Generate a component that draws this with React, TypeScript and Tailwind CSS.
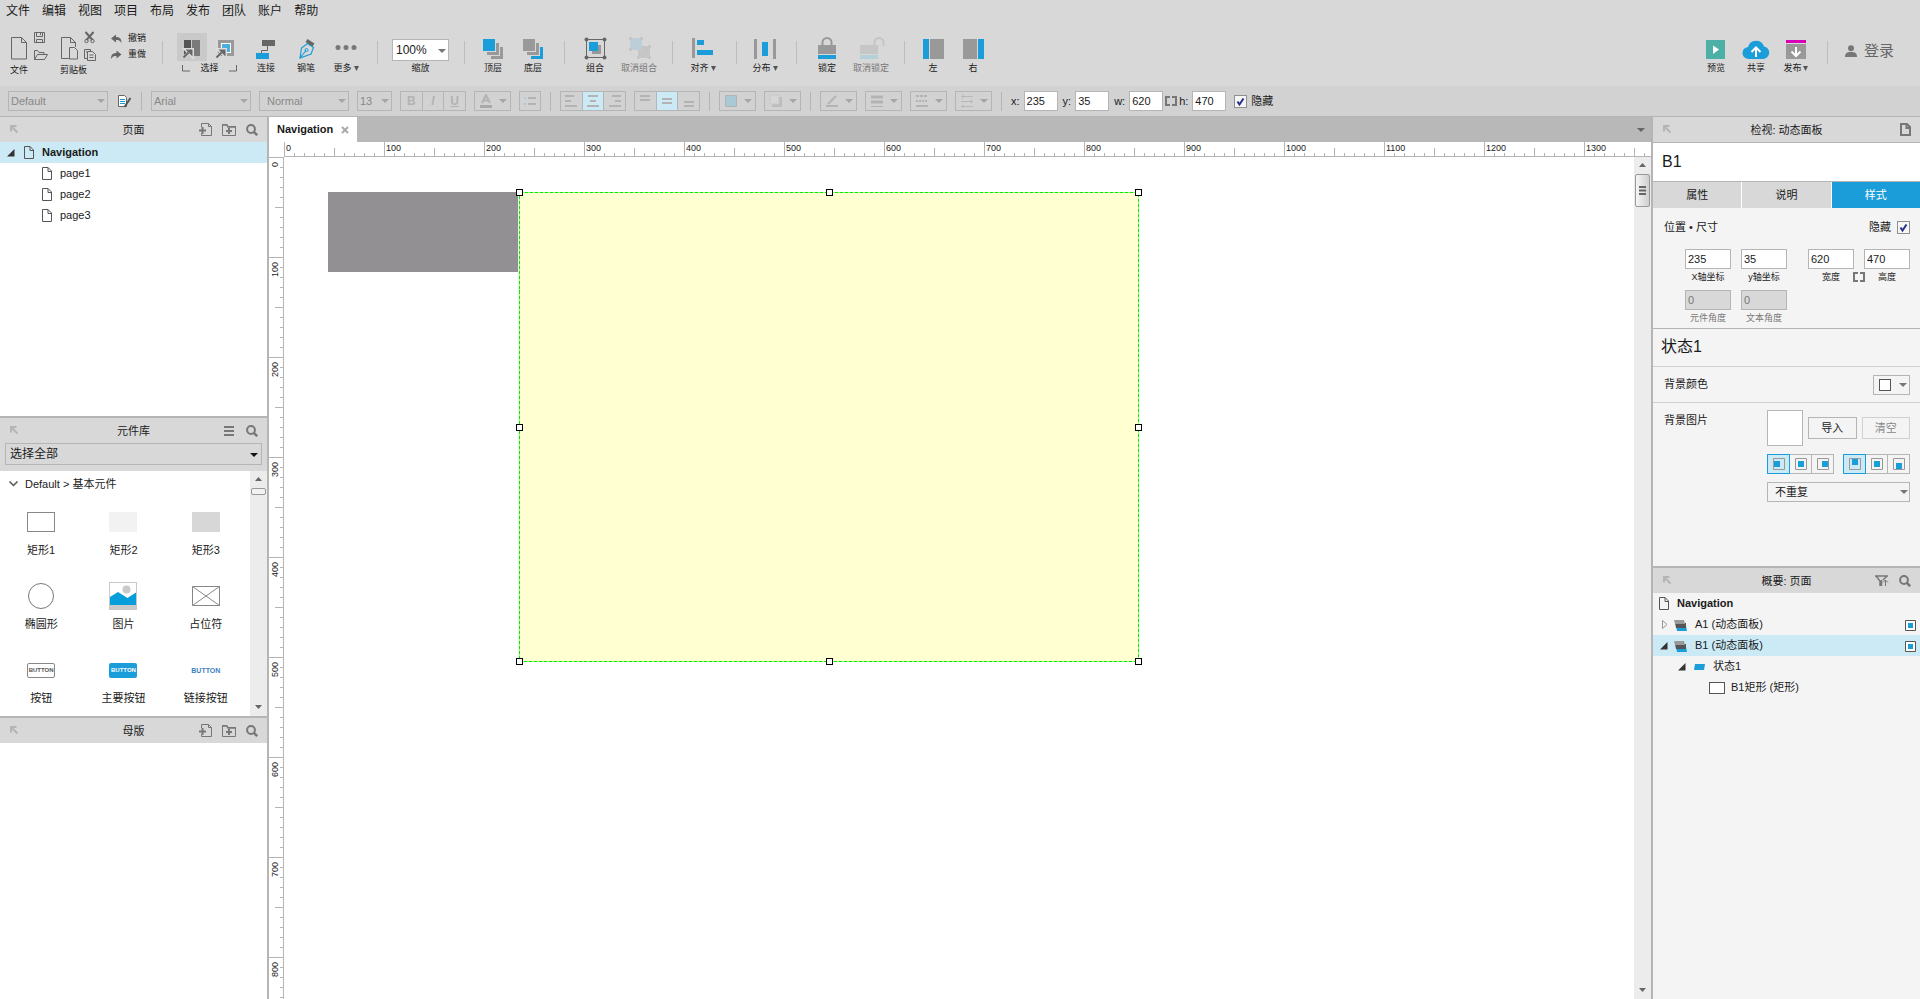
import React, { useLayoutEffect, useRef, useState } from 'react';

interface ToolProps {
  label: string;
  disabled?: boolean;
  menu?: boolean;
  wide?: boolean;
  children: React.ReactNode;
}

const Svg: React.FC<{ w: number; h: number; children: React.ReactNode }> = ({ w, h, children }) => (
  <svg width={w} height={h} viewBox={`0 0 ${w} ${h}`} fill="none" className="block shrink-0" aria-hidden="true">{children}</svg>
);

const Tool: React.FC<ToolProps> = ({ label, disabled, menu, wide, children }) => (
  <button
    disabled={disabled}
    className={`flex flex-col items-center shrink-0 ${wide ? 'w-11' : 'w-10'} ${disabled ? 'text-[#777]' : 'text-[#1a1a1a]'}`}
  >
    <Svg w={28} h={32}>{children}</Svg>
    <span className="flex items-center gap-[2px] text-[9px] leading-3 whitespace-nowrap">
      {label}
      {menu && <Svg w={5} h={5}><path d="M0 0h5L2.5 5z" fill="#555" /></Svg>}
    </span>
  </button>
);

const Divider = () => <div className="w-px h-[23px] mt-[11px] ml-[11px] mr-[8px] bg-[#bdbdbd] shrink-0" />;
const BarDivider = () => <div className="w-px h-[19px] mx-px bg-[#b5b5b5] shrink-0" />;

const Caret: React.FC<{ color?: string }> = ({ color = '#777' }) => (
  <Svg w={8} h={4}><path d="M0 0h8L4 4z" fill={color} /></Svg>
);

const PageIcon = () => (
  <Svg w={10} h={13}>
    <path d="M.5.5h5.5l3.5 3.5v8.5h-9zM6 .5v4h3.500" stroke="#555" />
  </Svg>
);

const PinIcon = () => (
  <button aria-label="Dock" className="justify-self-start ml-[10px]">
    <Svg w={8} h={9}><path d="M1 6.500V1h5.500M1.500 1.500l6 6" stroke="#b5b5b5" strokeWidth="2" /></Svg>
  </button>
);

const SearchIcon = () => (
  <button aria-label="Search">
    <Svg w={12} h={12}>
      <circle cx="5" cy="5" r="3.900" stroke="#777" strokeWidth="2" />
      <path d="M7.800 7.800l3.400 3.400" stroke="#777" strokeWidth="2.500" />
    </Svg>
  </button>
);

const AddPageIcon = () => (
  <button aria-label="Add page">
    <Svg w={13} h={13}>
      <path d="M2.500 4V.500h7l3 3v9h-10v-2M9.500.500v3h3" stroke="#777" />
      <path d="M0 7.500h7M3.500 4v7" stroke="#777" strokeWidth="2" />
    </Svg>
  </button>
);

const AddFolderIcon = () => (
  <button aria-label="Add folder">
    <Svg w={14} h={12}>
      <path d="M.500 11.500v-11h4l1 2h8v9z" stroke="#777" />
      <path d="M0 1h5l1 2h8" stroke="#777" strokeWidth="1.500" />
      <path d="M4 7h6M7 4v6" stroke="#777" strokeWidth="2" />
    </Svg>
  </button>
);

const PanelHeader: React.FC<{ title: string; children?: React.ReactNode }> = ({ title, children }) => (
  <div className="grid grid-cols-[1fr_auto_1fr] items-center h-[25px] bg-[#d8d8d8] shrink-0">
    <PinIcon />
    <h2 className="text-[11px] leading-4">{title}</h2>
    <div className="flex items-center justify-end gap-[10px] pr-[9px]">{children}</div>
  </div>
);

const Check: React.FC<{ id: string }> = ({ id }) => {
  const [on, setOn] = useState(true);
  return (
    <span className="relative block size-[13px] shrink-0">
      <input
        id={id}
        type="checkbox"
        checked={on}
        onChange={e => setOn(e.target.checked)}
        className="block size-[13px] appearance-none border border-[#8f8f8f] bg-[#f6f6f6]"
      />
      {on && (
        <svg viewBox="0 0 13 13" className="absolute inset-0 pointer-events-none" fill="none">
          <path d="M3.500 6.500l2 3L9.500 3.500" stroke="#26308c" strokeWidth="2" />
        </svg>
      )}
    </span>
  );
};

const BarSelect: React.FC<{ label: string; value: string; width: string; pad?: string }> = ({ label, value, width, pad = 'pl-[2px]' }) => (
  <span className={`relative block shrink-0 ${width}`}>
    <select
      aria-label={label}
      disabled
      className={`block w-full h-5 appearance-none border border-[#b5b5b5] text-[11px] leading-4 text-[#888] opacity-100 ${pad}`}
    >
      <option>{value}</option>
    </select>
    <span className="absolute right-[3px] top-2 pointer-events-none"><Caret color="#a5a5a5" /></span>
  </span>
);

const IconGroup: React.FC<{ label: string; active?: number; icons: React.ReactNode[] }> = ({ label, active, icons }) => (
  <div role="group" aria-label={label} className="flex h-5 w-[66px] border border-[#b5b5b5] divide-x divide-[#b5b5b5] shrink-0">
    {icons.map((icon, i) => (
      <button key={i} disabled aria-label={`${label} ${i + 1}`} className={`flex-1 flex items-center justify-center ${i === active ? 'bg-[#cbeaf6]' : ''}`}>
        {icon}
      </button>
    ))}
  </div>
);

const IconMenu: React.FC<{ label: string; children: React.ReactNode }> = ({ label, children }) => (
  <button disabled aria-label={label} className="flex items-center justify-between h-5 w-[37px] pl-1 pr-[3px] border border-[#b5b5b5] shrink-0">
    <Svg w={14} h={14}>{children}</Svg>
    <Caret color="#a5a5a5" />
  </button>
);

const lines = (d: string) => <Svg w={14} h={14}><path d={d} stroke="#b3b3b3" strokeWidth="2" /></Svg>;

const LinkIcon = () => (
  <Svg w={12} h={10}><path d="M5 1H1v8h4M7 1h4v8H7" stroke="#777" strokeWidth="2" /></Svg>
);

const BarField: React.FC<{ name: string; value: string }> = ({ name, value }) => (
  <span className="flex items-center gap-1">
    <label htmlFor={`bar-${name}`} className="text-[11px] leading-4">{name}:</label>
    <input id={`bar-${name}`} defaultValue={value} className="w-[34px] h-5 px-[2px] border border-[#b5b5b5] bg-white text-[11px] leading-4" />
  </span>
);

const menus = ['文件', '编辑', '视图', '项目', '布局', '发布', '团队', '账户', '帮助'];

const CursorArrow = () => (
  <>
    <path d="M6.500 24.500l5-5M8.500 16.500h7v7z" stroke="#ddd" strokeWidth="3" />
    <path d="M6.500 24.500l5-5" stroke="#666" strokeWidth="2" />
    <path d="M8.500 16.500h7v7z" fill="#666" />
  </>
);

const Toolbar = () => (
  <div className="flex items-start h-16 pt-2 pl-[10px] pr-[26px]">
    <div className="flex flex-col items-start w-[50px] shrink-0">
      <div className="flex gap-[6px]">
        <button aria-label="New">
          <Svg w={18} h={32}><path d="M1.500 7.500h10l5 5v16.500h-15zM11.500 7.500v5h5" stroke="#666" /></Svg>
        </button>
        <div className="flex flex-col">
          <button aria-label="Save">
            <Svg w={14} h={16}><path d="M.500 2.500h10v10H.500zM2.500 2.500v4h6v-4M2.500 12.500v-3h6v3M6.500 3v2" stroke="#666" /></Svg>
          </button>
          <button aria-label="Open">
            <Svg w={14} h={16}><path d="M.500 13.500v-9h3l1.500 2h5v2M.500 13.500l3-5h10l-3 5z" stroke="#666" /></Svg>
          </button>
        </div>
      </div>
      <span className="text-[9px] leading-4">文件</span>
    </div>
    <div className="flex flex-col items-start w-[50px] shrink-0">
      <div className="flex gap-[6px]">
        <button aria-label="Paste">
          <Svg w={18} h={32}><path d="M9 28.500H1.500v-21h9l5 5V17M10.500 7.500v5h5M9.500 17.500h5l3 3v8.500h-8z" stroke="#666" /></Svg>
        </button>
        <div className="flex flex-col">
          <button aria-label="Cut">
            <Svg w={14} h={16}>
              <path d="M1.500 2l7 8M9.500 2l-7 8" stroke="#666" strokeWidth="2" />
              <circle cx="2.500" cy="11" r="1.700" stroke="#666" /><circle cx="8.500" cy="11" r="1.700" stroke="#666" />
            </Svg>
          </button>
          <button aria-label="Copy">
            <Svg w={14} h={16}><path d="M3.500 12.500h-3v-9h6v2M3.500 5.500h5l3 3v6h-8zM5.500 9h4M5.500 11.500h4M2 6h1" stroke="#666" /></Svg>
          </button>
        </div>
      </div>
      <span className="text-[9px] leading-4">剪贴板</span>
    </div>
    <div className="flex flex-col pt-px shrink-0">
      <button className="flex items-center gap-[6px] h-4 text-[9px]">
        <Svg w={12} h={10}><path d="M1 4.500L6 .500v2.500c4 0 5.500 2 5.500 6-1.500-2.500-3-3-5.500-3v2.500z" fill="#666" /></Svg>撤销
      </button>
      <button className="flex items-center gap-[6px] h-4 text-[9px]">
        <Svg w={12} h={10}><path d="M11.500 4.500L6.500.500v2.500C2.500 3 1 5 1 9c1.500-2.500 3-3 5.500-3v2.500z" fill="#666" /></Svg>重做
      </button>
    </div>
    <div className="w-px h-[23px] mt-[11px] ml-4 mr-[14px] bg-[#bdbdbd] shrink-0" />

    <div className="flex flex-col w-[63px] mr-[6px] shrink-0">
      <div className="flex gap-[3px] h-8 pt-[3px]">
        <button aria-label="Select intersected" className="h-7 bg-[#c9c9c9]">
          <Svg w={30} h={28}>
            <path d="M7 7h7v15H7z" fill="#555" /><path d="M15 7h8v16h-8z" fill="#7a7a7a" />
            <CursorArrow />
          </Svg>
        </button>
        <button aria-label="Select contained" className="h-7">
          <Svg w={30} h={28}>
            <path d="M9.500 8.500h13v13h-13z" fill="#fff" stroke="#999" strokeWidth="3" /><path d="M12 11h8v8h-8z" fill="#4aaee0" />
            <CursorArrow />
          </Svg>
        </button>
      </div>
      <div className="flex items-center justify-between pl-[5px] pr-[3px] text-[9px] leading-3">
        <Svg w={8} h={8}><path d="M.500 1v6h7.500" stroke="#666" /></Svg>选择
        <Svg w={8} h={8}><path d="M7.500 1v6H0" stroke="#666" /></Svg>
      </div>
    </div>
    <Tool label="连接">
      <path d="M10 10h13v6H10z" fill="#666" /><path d="M4 23h13v6H4z" fill="#1b9dd9" /><path d="M15.500 16v4.500h-6V23" stroke="#666" />
    </Tool>
    <Tool label="钢笔">
      <path d="M8 28l1.500-10 6-4.500 6 4-2.500 6.500zM8 28l6-7.500" stroke="#1b9dd9" strokeWidth="1.200" />
      <circle cx="14.500" cy="20" r="1.500" stroke="#1b9dd9" /><path d="M14.500 10.500l7 4.500" stroke="#666" strokeWidth="3.500" />
    </Tool>
    <Tool label="更多" menu>
      <g fill="#777"><circle cx="6" cy="17.500" r="2.500" /><circle cx="14" cy="17.500" r="2.500" /><circle cx="22" cy="17.500" r="2.500" /></g>
    </Tool>
    <Divider />
    <div className="flex flex-col items-center pl-[6px] pr-1 shrink-0">
      <div className="relative h-8 pt-[9px]">
        <select id="zoom" className="block w-[57px] h-[22px] pl-[3px] appearance-none border border-[#b5b5b5] bg-white text-xs leading-4">
          <option>100%</option>
        </select>
        <span className="absolute right-[3px] top-[19px] pointer-events-none"><Caret /></span>
      </div>
      <label htmlFor="zoom" className="text-[9px] leading-3">缩放</label>
    </div>
    <Divider />
    <Tool label="顶层">
      <path d="M4 9h12v12H4z" fill="#1b9dd9" /><path d="M17 13h3v12H8v-3h9zM21 17h3v12H12v-3h9z" fill="#999" />
    </Tool>
    <Tool label="底层">
      <path d="M4 9h12v12H4zM17 13h3v12H8v-3h9z" fill="#999" /><path d="M21 17h3v12H12v-3h9z" fill="#1b9dd9" />
    </Tool>
    <Divider />
    <Tool label="组合" wide>
      <path d="M11 15h9v9h-9z" fill="#999" /><path d="M8 12h9v9H8z" fill="#1b9dd9" /><path d="M5.500 9.500h18v18h-18z" stroke="#666" />
      <g fill="#666"><circle cx="5.500" cy="9.500" r="2" /><circle cx="23.500" cy="9.500" r="2" /><circle cx="5.500" cy="27.500" r="2" /><circle cx="23.500" cy="27.500" r="2" /></g>
    </Tool>
    <Tool label="取消组合" disabled wide>
      <path d="M13 16h12v12H13z" fill="#c6c6c6" /><path d="M5 8h12v12H5z" fill="#bccfd8" />
      <path d="M4 7h3v3H4zM15 7h3v3h-3zM4 18h3v3H4zM23 15h3v3h-3zM12 26h3v3h-3zM23 26h3v3h-3z" fill="#c6c6c6" />
    </Tool>
    <Divider />
    <Tool label="对齐" menu wide>
      <path d="M3 8h3v20H3z" fill="#999" /><path d="M8 10h7v5H8zM8 20h16v5H8z" fill="#1b9dd9" />
    </Tool>
    <Divider />
    <Tool label="分布" menu>
      <path d="M3 9h3v20H3zM22 9h3v20h-3z" fill="#999" /><path d="M11 12h6v14h-6z" fill="#1b9dd9" />
    </Tool>
    <Divider />
    <Tool label="锁定" wide>
      <path d="M9.500 15v-2.500a4.500 4.500 0 0 1 9 0V15" stroke="#999" strokeWidth="2" /><path d="M5 15h18v9H5z" fill="#999" /><path d="M5 25h18v4H5z" fill="#1b9dd9" />
    </Tool>
    <Tool label="取消锁定" disabled wide>
      <path d="M17.500 15v-2.500a4.500 4.500 0 0 1 9 0V16" stroke="#c4c4c4" strokeWidth="2" /><path d="M3 15h18v9H3z" fill="#c6c6c6" /><path d="M3 25h18v4H3z" fill="#b5cfdb" />
    </Tool>
    <Divider />
    <Tool label="左"><path d="M4 9h6v20H4z" fill="#1b9dd9" /><path d="M11 9h14v20H11z" fill="#999" /></Tool>
    <Tool label="右"><path d="M4 9h14v20H4z" fill="#999" /><path d="M19 9h6v20h-6z" fill="#1b9dd9" /></Tool>

    <div className="flex items-start ml-auto shrink-0">
      <Tool label="预览"><path d="M4 10h19v19H4z" fill="#4cb0a6" /><path d="M11 15.500l6 4-6 4.500z" fill="#fff" /></Tool>
      <Tool label="共享">
        <path d="M7 29a6 6 0 0 1-1-12 8.300 8.300 0 0 1 16-0.500A6.300 6.300 0 0 1 21 29z" fill="#1b9dd9" />
        <path d="M14 27v-8M9.500 22l4.500-4.500 4.500 4.500" stroke="#fff" strokeWidth="2" />
      </Tool>
      <Tool label="发布" menu>
        <path d="M4 10h20v3H4z" fill="#d800b8" /><path d="M4 14h20v15H4z" fill="#999" /><path d="M14 17v8M9.500 21.500L14 26l4.500-4.500" stroke="#fff" strokeWidth="2" />
      </Tool>
      <Divider />
      <button className="flex items-center gap-[7px] h-5 mt-[11px] ml-[9px] text-[15px] text-[#666]">
        <Svg w={12} h={12}><circle cx="6" cy="3.200" r="3" fill="#777" /><path d="M0 12c0-4 2-5 6-5s6 1 6 5z" fill="#777" /></Svg>登录
      </button>
    </div>
  </div>
);

const StyleBar = () => (
  <div className="flex items-center gap-2 h-[31px] pl-2 bg-[#d2d2d2] border-b border-[#b5b5b5]">
    <BarSelect label="Style" value="Default" width="w-[100px]" />
    <button aria-label="Edit style">
      <Svg w={16} h={14}>
        <path d="M2.500 1.500h6l2 2v9h-8z" fill="#fff" stroke="#666" /><path d="M4 5.500h5M4 7.500h5M4 9.500h5" stroke="#1b9dd9" />
        <path d="M8.500 13l6-9" stroke="#555" strokeWidth="2" />
      </Svg>
    </button>
    <BarDivider />
    <BarSelect label="Font" value="Arial" width="w-[100px]" />
    <BarSelect label="Weight" value="Normal" width="w-[90px]" pad="pl-[7px]" />
    <BarSelect label="Size" value="13" width="w-[35px]" />
    <IconGroup
      label="Text style"
      icons={[
        <b className="text-xs leading-4 text-[#b3b3b3]">B</b>,
        <b className="text-xs leading-4 italic text-[#b3b3b3]">I</b>,
        <b className="text-xs leading-4 underline text-[#b3b3b3]">U</b>,
      ]}
    />
    <IconMenu label="Text color"><path d="M3 9l4-8 4 8M4.500 6.500h5" stroke="#b3b3b3" strokeWidth="2" /><path d="M1 11h12v3H1z" fill="#a9a9a9" /></IconMenu>
    <button disabled aria-label="Bullets" className="flex items-center justify-center w-[22px] h-5 border border-[#b5b5b5] shrink-0">
      <Svg w={14} h={12}><path d="M5 3h8M5 9h8" stroke="#b3b3b3" strokeWidth="2" /><path d="M1 3h2M1 9h2" stroke="#a5cbdc" strokeWidth="2" /></Svg>
    </button>
    <BarDivider />
    <IconGroup label="Align" active={1} icons={[lines('M1 2h9M1 7h6M1 12h12'), lines('M2 2h10M4 7h6M1 12h12'), lines('M4 2h9M7 7h6M1 12h12')]} />
    <IconGroup label="Vertical align" active={1} icons={[lines('M2 2h10M2 6h10'), lines('M2 5h10M2 9h10'), lines('M2 8h10M2 12h10')]} />
    <BarDivider />
    <IconMenu label="Fill"><path d="M1.500 1.500h11v11h-11z" fill="#a9c9d6" stroke="#b3b3b3" /></IconMenu>
    <IconMenu label="Shadow"><path d="M3 3h10v10H3z" fill="#bdbdbd" /><path d="M1 1h9v9H1z" fill="#d6d6d6" stroke="#c8c8c8" /></IconMenu>
    <BarDivider />
    <IconMenu label="Line color"><path d="M1 12h12" stroke="#b3b3b3" strokeWidth="2" /><path d="M3 10l8-8" stroke="#b3b3b3" strokeWidth="2" /></IconMenu>
    <IconMenu label="Line width"><path d="M1 3h12M1 8h12" stroke="#b3b3b3" strokeWidth="3" /><path d="M1 12.500h12" stroke="#b3b3b3" /></IconMenu>
    <IconMenu label="Line style"><path d="M1 2h12" stroke="#b3b3b3" strokeWidth="2" strokeDasharray="3 1" /><path d="M1 7h12" stroke="#b3b3b3" strokeWidth="2" strokeDasharray="2 1" /><path d="M1 12h12" stroke="#b3b3b3" strokeWidth="2" /></IconMenu>
    <IconMenu label="Arrow style"><path d="M1 2.500h12M1 7.500h12M1 12.500h12M3 .500v4M11 5.500v4M3 10.500v3.500" stroke="#b8b8b8" /></IconMenu>
    <BarDivider />
    <div className="flex items-center gap-[5px]">
      <BarField name="x" value="235" />
      <BarField name="y" value="35" />
      <span className="flex items-center gap-[2px]">
        <BarField name="w" value="620" />
        <LinkIcon />
        <BarField name="h" value="470" />
      </span>
    </div>
    <span className="flex items-center gap-1">
      <Check id="bar-hidden" />
      <label htmlFor="bar-hidden" className="text-[11px] leading-4">隐藏</label>
    </span>
  </div>
);

const OpenTriangle = () => <Svg w={8} h={8}><path d="M7.500 0v7.500H0z" fill="#333" /></Svg>;

const ScrollArrow: React.FC<{ up?: boolean }> = ({ up }) => (
  <Svg w={7} h={4}><path d={up ? 'M0 4h7L3.500 0z' : 'M0 0h7L3.500 4z'} fill="#666" /></Svg>
);

const widgets: { name: string; icon: React.ReactNode }[] = [
  { name: '矩形1', icon: <div className="w-7 h-5 border border-[#888]" /> },
  { name: '矩形2', icon: <div className="w-7 h-5 bg-[#f2f2f2]" /> },
  { name: '矩形3', icon: <div className="w-7 h-5 bg-[#d7d7d7]" /> },
  { name: '椭圆形', icon: <div className="size-[26px] rounded-full border border-[#777]" /> },
  {
    name: '图片',
    icon: (
      <Svg w={28} h={28}>
        <path d="M0 0h28v28H0z" fill="#c9c9c9" /><path d="M1 1h26v22H1z" fill="#fff" />
        <circle cx="17.500" cy="7.500" r="4" fill="#c9c9c9" /><path d="M1 15l8-5 9.500 6 8.500-5.500V23H1z" fill="#069ddb" />
      </Svg>
    ),
  },
  { name: '占位符', icon: <Svg w={28} h={20}><path d="M.500.500h27v19H.500zM.500.500l27 19M27.500.500l-27 19" stroke="#888" /></Svg> },
  { name: '按钮', icon: <span className="w-7 h-[15px] rounded-xs border border-[#888] text-[6px] leading-[13px] font-bold text-center text-[#555]">BUTTON</span> },
  { name: '主要按钮', icon: <span className="w-7 h-[15px] rounded-xs bg-[#1b9dd9] text-[6px] leading-[15px] font-bold text-center text-white">BUTTON</span> },
  { name: '链接按钮', icon: <span className="text-[7px] leading-[15px] font-bold text-[#3c7fc0]">BUTTON</span> },
];

const LeftPanels = () => (
  <aside className="flex flex-col w-[269px] border-r-2 border-[#b5b5b5] bg-white shrink-0">
    <PanelHeader title="页面"><AddPageIcon /><AddFolderIcon /><SearchIcon /></PanelHeader>
    <ul className="h-[274px] text-[11px]">
      <li className="flex items-center h-[21px] pl-[7px] bg-[#cbeaf6] font-bold">
        <OpenTriangle /><span className="ml-[9px] mr-2"><PageIcon /></span>Navigation
      </li>
      {['page1', 'page2', 'page3'].map(page => (
        <li key={page} className="flex items-center gap-2 h-[21px] pl-[42px]"><PageIcon />{page}</li>
      ))}
    </ul>

    <section className="border-y-2 border-[#b5b5b5]">
      <PanelHeader title="元件库">
        <button aria-label="Menu" className="px-[2px]"><Svg w={10} h={10}><path d="M0 1h10M0 5h10M0 9h10" stroke="#777" strokeWidth="2" /></Svg></button>
        <SearchIcon />
      </PanelHeader>
      <div className="px-[5px] pb-[6px] bg-[#d8d8d8]">
        <div className="relative">
          <select aria-label="元件库" className="block w-full h-[22px] pl-1 appearance-none border border-[#b5b5b5] text-xs leading-4">
            <option>选择全部</option>
          </select>
          <span className="absolute right-1 top-[10px] pointer-events-none"><Caret color="#111" /></span>
        </div>
      </div>
      <div className="flex">
        <div className="flex-1">
          <button className="flex items-center gap-[7px] h-[26px] pl-[9px] text-[11px]">
            <Svg w={9} h={6}><path d="M.500.500l4 4 4-4" stroke="#555" strokeWidth="1.500" /></Svg>Default &gt; 基本元件
          </button>
          <ul className="grid grid-cols-3 gap-y-[23px] pt-[9px] pb-[11px] pr-[3px]">
            {widgets.map(widget => (
              <li key={widget.name} className="flex flex-col items-center gap-[5px]">
                <div className="flex items-center h-8">{widget.icon}</div>
                <span className="text-[11px] leading-[14px]">{widget.name}</span>
              </li>
            ))}
          </ul>
        </div>
        <div className="flex flex-col items-center w-[17px] pt-[6px] pb-[7px] bg-[#ececec]">
          <ScrollArrow up />
          <div className="w-[15px] h-[7px] mt-[7px] rounded-xs border border-[#999] bg-[#f2f2f2]" />
          <span className="mt-auto"><ScrollArrow /></span>
        </div>
      </div>
    </section>
    <PanelHeader title="母版"><AddPageIcon /><AddFolderIcon /><SearchIcon /></PanelHeader>
  </aside>
);

const tickSize = (pos: number) => (pos % 100 === 0 ? 15 : pos % 50 === 0 ? 9 : 4);

const Ruler: React.FC<{ vertical?: boolean }> = ({ vertical }) => {
  const ref = useRef<HTMLDivElement>(null);
  const [length, setLength] = useState(0);

  useLayoutEffect(() => {
    const el = ref.current;
    if (!el) return;
    const measure = () => setLength(vertical ? el.clientHeight : el.clientWidth);
    measure();
    window.addEventListener('resize', measure);
    return () => window.removeEventListener('resize', measure);
  }, [vertical]);

  const ticks = Array.from({ length: Math.ceil(length / 10) }, (_, i) => i * 10);
  const labels = ticks.filter(pos => pos % 100 === 0 && pos + 24 < length);

  return (
    <div ref={ref} className="relative overflow-hidden">
      <svg className="absolute inset-0 size-full" aria-hidden="true" shapeRendering="crispEdges" fill="#b5b5b5">
        {ticks.map(pos => {
          const size = tickSize(pos);
          return vertical
            ? <rect key={pos} x={15 - size} y={pos} width={size} height="1" />
            : <rect key={pos} x={pos} y={15 - size} width="1" height={size} />;
        })}
        {vertical ? <rect x="14" width="1" height="100%" /> : <rect y="14" width="100%" height="1" />}
        {labels.map(pos => (
          <text
            key={pos}
            transform={vertical ? `translate(9 ${pos + 5}) rotate(-90)` : `translate(${pos + 2} 9)`}
            textAnchor={vertical ? 'end' : 'start'}
            fontSize="9"
            fill="#222"
          >
            {pos}
          </text>
        ))}
      </svg>
    </div>
  );
};

const Canvas = () => (
  <main className="flex flex-col flex-1 min-w-0">
    <div className="flex items-center h-[25px] pr-[6px] bg-[#b8b8b8] shrink-0">
      <div className="flex items-center gap-2 h-full px-2 bg-white text-[11px] font-bold">
        Navigation
        <button aria-label="Close tab"><Svg w={8} h={8}><path d="M1 1l6 6M7 1L1 7" stroke="#aaa" strokeWidth="2" /></Svg></button>
      </div>
      <button aria-label="Tabs" className="ml-auto"><Caret color="#666" /></button>
    </div>
    <div className="grid grid-cols-[15px_1fr] grid-rows-[15px_1fr] flex-1 min-h-0 bg-white">
      <div />
      <Ruler />
      <Ruler vertical />
      <div className="flex min-h-0">
        <div className="relative flex-1 overflow-hidden">
          <div className="absolute left-[44px] top-[35px] w-[190px] h-[80px] bg-[#929092]" />
          <div className="absolute left-[235px] top-[35px] w-[620px] h-[470px] bg-[#ffffd1]">
            <svg width="620" height="470" className="block overflow-visible" fill="none" shapeRendering="crispEdges">
              <rect x=".5" y=".5" width="619" height="469" stroke="#9dff7a" />
              <rect x=".5" y=".5" width="619" height="469" stroke="#00ee00" strokeDasharray="3 2" />
              {[[0, 0], [310, 0], [619, 0], [0, 235], [619, 235], [0, 469], [310, 469], [619, 469]].map(([x, y]) => (
                <rect key={`${x}-${y}`} x={x - 2.5} y={y - 2.5} width="6" height="6" fill="#fff" stroke="#000" />
              ))}
            </svg>
          </div>
        </div>
        <div className="flex flex-col items-center w-[17px] pt-[6px] pb-[7px] bg-[#ececec]">
          <ScrollArrow up />
          <div className="flex items-center justify-center w-[15px] h-[33px] mt-[7px] rounded-xs border border-[#999] bg-linear-to-r from-[#f6f6f6] to-[#cfcfcf]">
            <Svg w={7} h={9}><path d="M0 1h7M0 4.500h7M0 8h7" stroke="#666" strokeWidth="2" /></Svg>
          </div>
          <span className="mt-auto"><ScrollArrow /></span>
        </div>
      </div>
    </div>
  </main>
);

const SizeField: React.FC<{ label: string; value: string; disabled?: boolean }> = ({ label, value, disabled }) => {
  const id = `field-${label}`;
  return (
    <div className="flex flex-col items-center w-[46px]">
      <input
        id={id}
        defaultValue={value}
        disabled={disabled}
        className="w-full h-5 px-[2px] border border-[#b5b5b5] bg-white text-[11px] leading-4 disabled:bg-[#d8d8d8] disabled:text-[#777]"
      />
      <label htmlFor={id} className={`text-[9px] leading-4 whitespace-nowrap ${disabled ? 'text-[#777]' : ''}`}>{label}</label>
    </div>
  );
};

const Anchors: React.FC<{ label: string; spots: [number, number][] }> = ({ label, spots }) => {
  const [active, setActive] = useState(0);
  return (
    <div role="group" aria-label={label} className="flex">
      {spots.map(([x, y], i) => (
        <button
          key={i}
          aria-label={`${label} ${i + 1}`}
          onClick={() => setActive(i)}
          className={`flex items-center justify-center w-[23px] h-5 border ${i > 0 ? '-ml-px' : ''} ${i === active ? 'relative border-[#1b9dd9] bg-[#cbeaf6]' : 'border-[#b5b5b5]'}`}
        >
          <Svg w={12} h={12}><path d="M.500.500h11v11H.500z" stroke="#999" /><rect x={x} y={y} width="6" height="6" fill="#1b9dd9" /></Svg>
        </button>
      ))}
    </div>
  );
};

const PanelIcon = () => (
  <Svg w={13} h={12}>
    <path d="M2 7h10l1 5H3z" fill="#1b9dd9" /><path d="M1 4h11v5H2z" fill="#555" /><path d="M0 1h10l1 4H1z" fill="#999" />
  </Svg>
);

const Marker = () => (
  <span className="ml-auto mr-1 mt-px"><Svg w={11} h={11}><path d="M.500.500h10v10H.500z" fill="#fff" stroke="#555" /><path d="M3 3h5v5H3z" fill="#1b9dd9" /></Svg></span>
);

const RightPanels = () => (
  <aside className="flex flex-col w-[269px] border-l-2 border-[#b5b5b5] bg-[#f4f4f4] shrink-0">
    <PanelHeader title="检视: 动态面板">
      <button aria-label="Page"><Svg w={11} h={13}><path d="M1 1h6l3 3v8H1zM6.500 1v4H10" stroke="#777" strokeWidth="2" /></Svg></button>
    </PanelHeader>
    <div className="h-10 border-y border-[#b5b5b5] bg-white">
      <input aria-label="Name" defaultValue="B1" className="block w-full h-[38px] pl-[9px] text-base" />
    </div>
    <div className="flex gap-px h-[26px] bg-white text-[11px]">
      <button className="flex-1 bg-[#d8d8d8]">属性</button>
      <button className="flex-1 bg-[#d8d8d8]">说明</button>
      <button className="flex-1 bg-[#1b9dd9] text-white">样式</button>
    </div>

    <section className="pl-[11px] pr-[10px] pt-[11px] pb-[2px] border-b border-[#b5b5b5] text-[11px] leading-4">
      <div className="flex items-center justify-between">
        <h3>位置 • 尺寸</h3>
        <span className="flex items-center gap-[6px]">
          <label htmlFor="hidden">隐藏</label>
          <Check id="hidden" />
        </span>
      </div>
      <div className="flex justify-end gap-[10px] mt-[14px]">
        <SizeField label="X轴坐标" value="235" />
        <SizeField label="y轴坐标" value="35" />
        <div className="flex items-end ml-[11px]">
          <SizeField label="宽度" value="620" />
          <span className="flex justify-center w-[10px] h-[13px]"><LinkIcon /></span>
          <SizeField label="高度" value="470" />
        </div>
      </div>
      <div className="flex gap-[10px] mt-[5px] pl-[21px]">
        <SizeField label="元件角度" value="0" disabled />
        <SizeField label="文本角度" value="0" disabled />
      </div>
    </section>

    <h3 className="h-[38px] pl-2 border-b border-[#d0d0d0] text-base leading-9">状态1</h3>
    <div className="flex items-center justify-between h-9 pl-[11px] pr-[10px] border-b border-[#d0d0d0] text-[11px]">
      背景颜色
      <button aria-label="背景颜色" className="flex items-center justify-between w-[37px] h-5 pl-[5px] pr-[2px] border border-[#b5b5b5]">
        <span className="size-3 border border-[#555] bg-white" />
        <Caret />
      </button>
    </div>
    <div className="flex justify-between h-[163px] pl-[11px] pr-[10px] pt-[7px] text-[11px] leading-5">
      <span>背景图片</span>
      <div className="w-[143px]">
        <div className="flex items-center gap-[5px]">
          <div className="size-9 border border-[#b5b5b5] bg-white" />
          <button className="flex-1 h-[22px] border border-[#b5b5b5]">导入</button>
          <button disabled className="flex-1 h-[22px] border border-[#d0d0d0] text-[#888]">清空</button>
        </div>
        <div className="flex justify-between mt-2">
          <Anchors label="Horizontal" spots={[[1, 3], [3, 3], [5, 3]]} />
          <Anchors label="Vertical" spots={[[3, 1], [3, 3], [3, 5]]} />
        </div>
        <div className="relative mt-2">
          <select aria-label="Repeat" className="block w-full h-5 pl-[7px] appearance-none border border-[#b5b5b5] text-[11px] leading-4">
            <option>不重复</option>
          </select>
          <span className="absolute right-[2px] top-2 pointer-events-none"><Caret /></span>
        </div>
      </div>
    </div>

    <div className="border-t-2 border-[#b5b5b5]">
      <PanelHeader title="概要: 页面">
        <button aria-label="Filter">
          <Svg w={14} h={12}><path d="M0 1h13M1 1l4 5v5M12 1L8 5M6.500 5v6" stroke="#777" strokeWidth="1.500" /><path d="M10.500 11V5M8 7.500L10.500 5 13 7.500" stroke="#777" /></Svg>
        </button>
        <SearchIcon />
      </PanelHeader>
    </div>
    <ul className="text-[11px]">
      <li className="flex items-center gap-2 h-[21px] pl-[6px] font-bold"><PageIcon />Navigation</li>
      <li className="flex items-center h-[21px] pl-[8px]">
        <Svg w={8} h={9}><path d="M1.500.500l4.500 4-4.500 4z" stroke="#999" /></Svg>
        <span className="ml-[5px] mr-2"><PanelIcon /></span>A1 (动态面板)<Marker />
      </li>
      <li className="flex items-center h-[21px] pl-[7px] bg-[#cbeaf6]">
        <OpenTriangle /><span className="ml-[6px] mr-2"><PanelIcon /></span>B1 (动态面板)<Marker />
      </li>
      <li className="flex items-center gap-2 h-[21px] pl-[25px]">
        <OpenTriangle /><Svg w={11} h={6}><path d="M1 0h10l-1 6H0z" fill="#1b9dd9" /></Svg>状态1
      </li>
      <li className="flex items-center gap-[6px] h-[21px] pl-[56px]"><span className="w-4 h-3 border border-[#555] bg-white" />B1矩形 (矩形)</li>
    </ul>
  </aside>
);

const App: React.FC = () => (
  <div className="flex flex-col h-screen overflow-hidden bg-[#d8d8d8] text-[#1a1a1a] font-['Liberation_Sans','Noto_Sans_CJK_SC',sans-serif]">
    <header className="shrink-0">
      <nav className="flex gap-3 h-[22px] pl-[6px] text-xs leading-[22px]">
        {menus.map(item => <button key={item}>{item}</button>)}
      </nav>
      <Toolbar />
      <StyleBar />
    </header>
    <div className="flex flex-1 min-h-0">
      <LeftPanels />
      <Canvas />
      <RightPanels />
    </div>
  </div>
);

export default App;
